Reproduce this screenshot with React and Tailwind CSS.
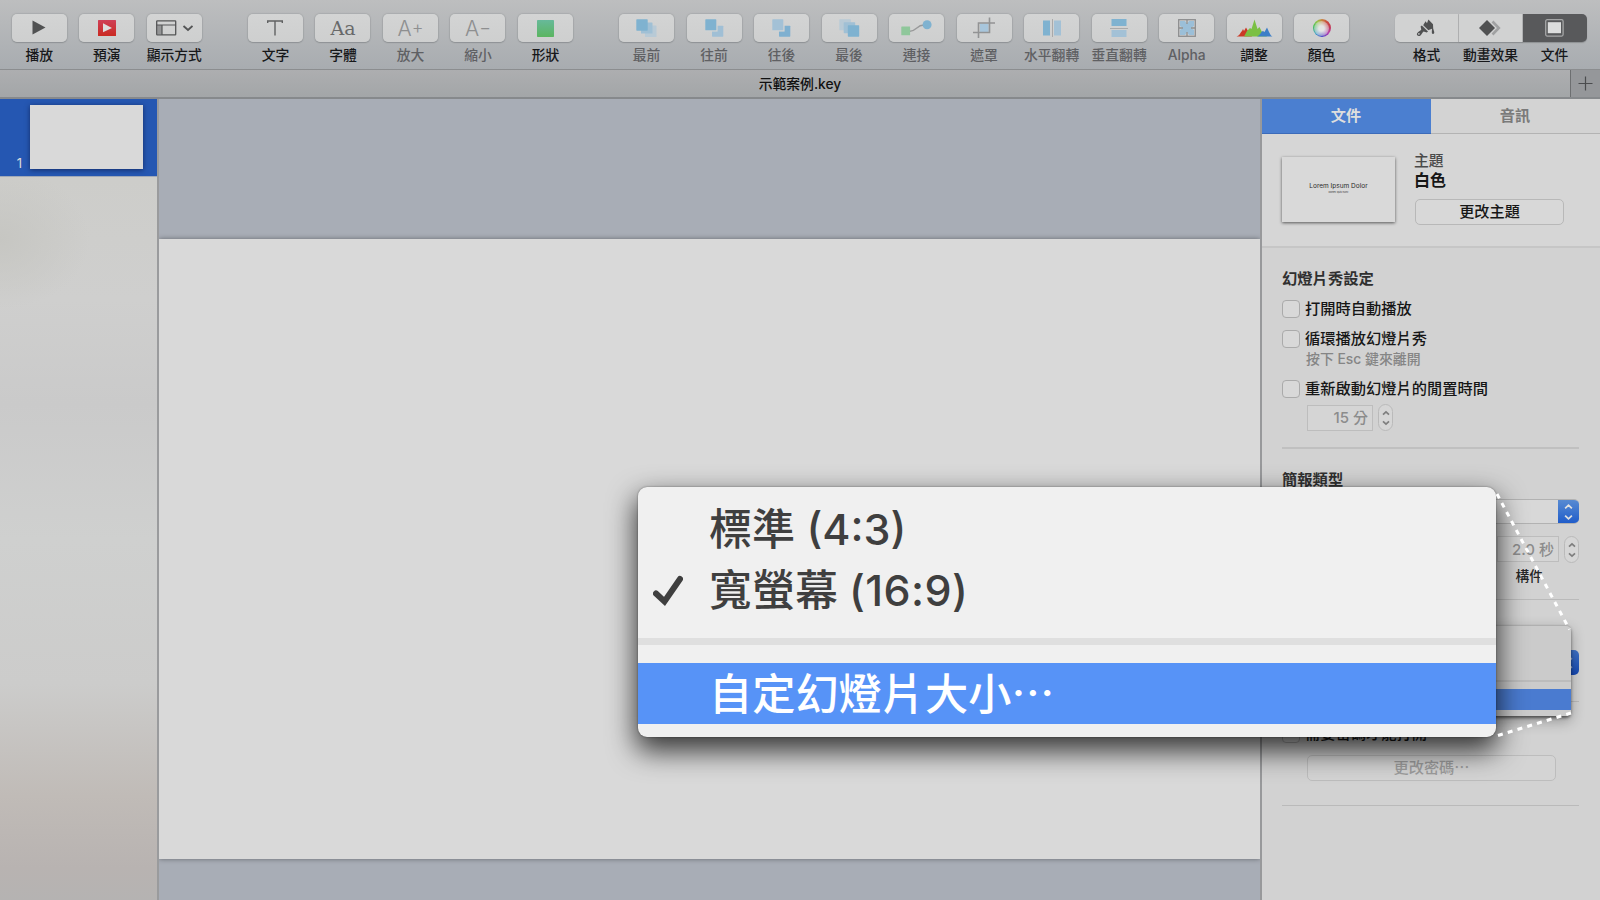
import React from "react";

const PlayIcon = () => (
  <svg width="14" height="16" viewBox="0 0 14 16">
    <path d="M0.5 0.5L13.5 7.5L0.5 14.5Z" fill="#505152" />
  </svg>
);

const RehearseIcon = () => (
  <svg width="18" height="16" viewBox="0 0 18 16">
    <defs>
      <linearGradient id="red" x1="0" y1="0" x2="0" y2="1">
        <stop offset="0" stopColor="#cf4057" />
        <stop offset="1" stopColor="#ca2a22" />
      </linearGradient>
    </defs>
    <rect width="18" height="16" rx="0.5" fill="url(#red)" />
    <path d="M5 3.3L14 8L5 12.3Z" fill="#dedede" />
  </svg>
);

const ViewIcon = () => (
  <svg width="37" height="16" viewBox="0 0 37 16" fill="none" stroke="#545556">
    <rect x="1.2" y="5" width="4.8" height="9" fill="#949596" stroke="none" />
    <rect x="0.7" y="0.9" width="19" height="14" rx="0.6" strokeWidth="1.3" />
    <path d="M0.7 5H19.7M6 5V15" strokeWidth="1.2" />
    <path d="M27.5 6L32 10L36.5 6" strokeWidth="1.8" />
  </svg>
);

const ShapeIcon = () => (
  <svg width="17" height="17" viewBox="0 0 17 17">
    <defs>
      <linearGradient id="green" x1="0" y1="0" x2="0" y2="1">
        <stop offset="0" stopColor="#67b99a" />
        <stop offset="1" stopColor="#5bb560" />
      </linearGradient>
    </defs>
    <rect width="17" height="17" rx="0.7" fill="url(#green)" />
  </svg>
);

const TextIcon = () => (
  <svg width="16" height="16" viewBox="0 0 16 16" fill="none" stroke="#606162">
    <path d="M0.7 3V1H15.3V3M8 1V15.5" strokeWidth="1.4" />
  </svg>
);

const FrontIcon = () => (
  <svg width="21" height="18" viewBox="0 0 21 18">
    <rect x="9" y="6.5" width="11.5" height="11.5" rx="0.6" fill="#b8cad6" />
    <rect x="5" y="3.5" width="11.5" height="11" rx="0.6" fill="#a0c0d5" />
    <rect x="0.3" y="0.3" width="11.4" height="11.4" rx="0.6" fill="#7fb2d0" />
  </svg>
);

const ForwardIcon = () => (
  <svg width="19" height="18" viewBox="0 0 19 18">
    <rect x="7" y="6.7" width="11.3" height="11" rx="0.6" fill="#a0bfd5" />
    <rect x="0" y="0" width="12.6" height="12.6" fill="#d1d2d3" />
    <rect x="0.3" y="0.3" width="11" height="11" rx="0.6" fill="#7fb2d0" />
  </svg>
);

const BackwardIcon = () => (
  <svg width="19" height="18" viewBox="0 0 19 18">
    <rect x="7" y="6.7" width="11.3" height="11" rx="0.6" fill="#7fb0d0" />
    <rect x="0" y="0" width="12.6" height="12.6" fill="#d1d2d3" />
    <rect x="0.3" y="0.3" width="11" height="11" rx="0.6" fill="#a3c1d6" />
  </svg>
);

const BackIcon = () => (
  <svg width="21" height="18" viewBox="0 0 21 18">
    <rect x="0.3" y="0.3" width="11.5" height="11" rx="0.6" fill="#b8cad6" />
    <rect x="4.7" y="3.2" width="11.5" height="11" rx="0.6" fill="#a0c0d5" />
    <rect x="8.8" y="6.3" width="11.4" height="11.4" rx="0.6" fill="#7fb2d0" />
  </svg>
);

const ConnectIcon = () => (
  <svg width="31" height="16" viewBox="0 0 31 16">
    <path d="M8 11.5C16 11.5 15 5 23 5" fill="none" stroke="#98999a" strokeWidth="1.3" />
    <rect x="0.3" y="6.5" width="8.8" height="8.8" rx="0.5" fill="#8fc79b" />
    <circle cx="26.1" cy="4.8" r="4.5" fill="#7fb2d0" />
  </svg>
);

const MaskIcon = () => (
  <svg width="22" height="22" viewBox="0 0 22 22" fill="none" stroke="#929394">
    <rect x="7" y="6.5" width="8.5" height="8.5" fill="#a8c6dc" stroke="none" />
    <path d="M5.5 21V6H22M16.5 0.5V15.5H0" strokeWidth="1.6" />
  </svg>
);

const FlipHIcon = () => (
  <svg width="18" height="18" viewBox="0 0 18 18">
    <rect x="0" y="1.5" width="7" height="15" fill="#7fb2d0" />
    <rect x="11" y="1.5" width="7" height="15" fill="#a3c1d6" />
    <path d="M9.5 0.5V18" stroke="#808182" strokeDasharray="1 1" />
  </svg>
);

const FlipVIcon = () => (
  <svg width="18" height="18" viewBox="0 0 18 18">
    <rect x="1.5" y="0" width="15" height="7" fill="#7fb2d0" />
    <rect x="1.5" y="11" width="15" height="7" fill="#a3c1d6" />
    <path d="M0.5 9.5H18" stroke="#808182" strokeDasharray="1 1" />
  </svg>
);

const AlphaIcon = () => (
  <svg width="18" height="18" viewBox="0 0 18 18" fill="none">
    <path d="M2 2H7L9 5L11 2H16V7L13 9L16 11V16H11L9 13L7 16H2V11L5 9L2 7Z" fill="#9bbfd8" />
    <path d="M6 6H12V12H6Z" fill="#9bbfd8" />
    <rect x="0.7" y="0.7" width="16.6" height="16.6" stroke="#8d8e8f" strokeWidth="1.3" />
    <path d="M9 1V5M9 13V17M1 9H5M13 9H17" stroke="#8d8e8f" strokeWidth="1.3" />
  </svg>
);

const AdjustIcon = () => (
  <svg width="37" height="18" viewBox="0 0 37 18">
    <path d="M0.5 17.5C4 16.5 4 14 6 12L7 10L8 12L10 8.5L12 12L16 17.5Z" fill="#cb3a26" />
    <path d="M8 17.5L11 12L14 9L15.5 10L18.5 0.5L21.5 10L23.5 8L26 13L31 17.5Z" fill="#7bc043" />
    <path d="M21 17.5C25 16 25 12 27 12L28.5 13L31 8.5L33 13C34 14 34 16.5 36.5 17.5Z" fill="#3d7fc8" />
  </svg>
);

const ColorIcon = () => (
  <div className="flex h-[18px] w-[18px] items-center justify-center rounded-full bg-[conic-gradient(#c9833f,#c9463f_12%,#c43a52_22%,#b440b0_36%,#4741c8_50%,#3c9ec8_63%,#43c05a_78%,#96c444_90%,#c9833f)]">
    <div className="h-[15px] w-[15px] rounded-full bg-[radial-gradient(circle,#e4e4e4_25%,#e4e4e466_75%)]"></div>
  </div>
);

const FormatIcon = () => (
  <svg width="20" height="18" viewBox="0 0 20 18" fill="#505152">
    <path d="M8.2 4.6L9.6 2.2L11 4.2L12.4 0.6L17 5.2L17.2 9.5L18.3 13.2Q18.4 15 17 15Q15.6 15 15.8 13.2L16 9.8L12 11.2L7 6.4Z" />
    <path d="M5.8 6.4L12 12.4L10.8 13.5L7.6 12.6C6.5 13 6 15.5 4.2 16.7C2.5 17.5 0.3 16.6 1 14.5C2 12.5 4.5 12 5.3 10.5L4.6 7.6Z" />
    <path d="M6.6 6L12.4 11.6" stroke="#d1d2d3" strokeWidth="0.7" />
    <circle cx="2.9" cy="14.9" r="0.8" fill="#d1d2d3" />
  </svg>
);

const AnimateIcon = () => (
  <svg width="22" height="16" viewBox="0 0 22 16">
    <path d="M13.5 1.5L19.8 8L13.5 14.5" fill="none" stroke="#a0a1a2" strokeWidth="2.6" />
    <path d="M8 0L16 8L8 16L0 8Z" fill="#505152" />
  </svg>
);

const DocumentIcon = () => (
  <svg width="19" height="18" viewBox="0 0 19 18" fill="none">
    <rect x="0.7" y="0.7" width="17.4" height="16.4" rx="1.5" stroke="#a5a6a7" strokeWidth="1.3" />
    <rect x="2.8" y="3.2" width="13.2" height="11" fill="#dcdddd" />
  </svg>
);

const groups = [
  [
    { label: "播放", icon: <PlayIcon /> },
    { label: "預演", icon: <RehearseIcon /> },
    { label: "顯示方式", icon: <ViewIcon /> },
  ],
  [
    { label: "文字", icon: <TextIcon /> },
    {
      label: "字體",
      icon: <span className="font-['DejaVu_Serif',serif] text-[19px] font-extralight text-[#68696a]">Aa</span>,
    },
    {
      label: "放大",
      icon: <span className="flex items-center text-[21px] font-light text-[#8e8f90]">A<span className="text-[18px]">+</span></span>,
      disabled: true,
    },
    {
      label: "縮小",
      icon: <span className="flex items-center text-[21px] font-light text-[#8e8f90]">A<span className="text-[18px]">−</span></span>,
      disabled: true,
    },
    { label: "形狀", icon: <ShapeIcon /> },
  ],
  [
    { label: "最前", icon: <FrontIcon />, disabled: true },
    { label: "往前", icon: <ForwardIcon />, disabled: true },
    { label: "往後", icon: <BackwardIcon />, disabled: true },
    { label: "最後", icon: <BackIcon />, disabled: true },
    { label: "連接", icon: <ConnectIcon />, disabled: true },
    { label: "遮罩", icon: <MaskIcon />, disabled: true },
    { label: "水平翻轉", icon: <FlipHIcon />, disabled: true },
    { label: "垂直翻轉", icon: <FlipVIcon />, disabled: true },
    { label: "Alpha", icon: <AlphaIcon />, disabled: true },
    { label: "調整", icon: <AdjustIcon /> },
    { label: "顏色", icon: <ColorIcon /> },
  ],
];

const segments = [
  { label: "格式", icon: <FormatIcon /> },
  { label: "動畫效果", icon: <AnimateIcon /> },
  { label: "文件", icon: <DocumentIcon />, active: true },
];

function ToolbarItem({ item }) {
  return (
    <div className="flex w-[67.5px] flex-col items-center">
      <button className="flex h-7 w-[55px] items-center justify-center rounded-[5px] bg-linear-to-b from-[#d3d4d4] to-[#cecfcf] leading-none shadow-[0_0_1px_1px_rgba(120,122,126,0.22),0_1px_1px_rgba(90,92,96,0.3)]">
        {item.icon}
      </button>
      <div
        className={`mt-[3px] text-[13.8px] leading-5 font-medium whitespace-nowrap ${
          item.disabled ? "text-[#5f6063]" : "text-[#17181a]"
        }`}
      >
        {item.label}
      </div>
    </div>
  );
}

function Toolbar() {
  return (
    <div className="flex h-[70px] items-start border-b border-[#8b8d8f] bg-linear-to-b from-[#bdbebf] to-[#a8acb0] pt-[14px] pl-[5.5px]">
      {groups.map((group, i) => (
        <div key={i} className="mr-[33.7px] flex">
          {group.map((item) => (
            <ToolbarItem key={item.label} item={item} />
          ))}
        </div>
      ))}
      <div className="ml-[5.5px] flex">
        {segments.map((item, i) => (
          <div key={item.label} className="flex w-16 flex-col items-center">
            <button
              className={`flex h-7 w-full items-center justify-center shadow-[0_1px_1px_rgba(90,92,96,0.4)] ${
                item.active ? "rounded-r-[5px] bg-[#58595b]" : "border-r border-[#b5b6b7] bg-[#d1d2d2]"
              } ${i === 0 ? "rounded-l-[5px]" : ""}`}
            >
              {item.icon}
            </button>
            <div className="mt-[3px] text-[13.8px] leading-5 font-medium whitespace-nowrap text-[#17181a]">
              {item.label}
            </div>
          </div>
        ))}
      </div>
    </div>
  );
}

function Sidebar() {
  return (
    <div className="flex w-[159px] flex-col border-r-2 border-[#9a9b9d] bg-[radial-gradient(ellipse_90px_70px_at_0_140px,#c6c6c2,transparent),linear-gradient(to_bottom,#cecfce_0,#cdcdca_10%,#cfcfce_25%,#cacaca_38%,#cfd0cf_55%,#cccccb_73%,#c0bbb7_87%,#b8b3b1_96%,#b5b3b2_100%)]">
      <div className="flex h-[78px] items-end border-b border-[#a0a9b8] bg-[#2557b2] pb-[7px]">
        <span className="w-[30px] pr-[8px] text-right text-[13px] leading-3 text-[#dcdcdc]">1</span>
        <div className="h-16 w-[113px] bg-[#d9d9d9] shadow-[0_1px_5px_rgba(0,0,30,0.5)]"></div>
      </div>
    </div>
  );
}

function Checkbox({ label }) {
  return (
    <label className="flex h-[18px] items-center gap-[5px]">
      <span className="h-[18px] w-[18px] rounded-[4px] border border-[#aaaaaa] bg-[#d8d8d8]"></span>
      <span className="text-[15.25px] leading-[18px] font-medium whitespace-nowrap text-[#161616]">{label}</span>
    </label>
  );
}

const UpDown = ({ color, width = 1.4, size = 8 }) => (
  <svg width={size} height={size * 2} viewBox="0 0 8 16" fill="none" stroke={color} strokeWidth={width}>
    <path d="M1 4.7L4 1.9L7 4.7M1 11.3L4 14.1L7 11.3" />
  </svg>
);

function Stepper() {
  return (
    <div className="flex h-[27px] w-[15px] items-center justify-center rounded-full border border-[#bababa] bg-[#d6d6d6]">
      <UpDown color="#7e7e7e" width={1.7} />
    </div>
  );
}

function Inspector() {
  return (
    <div className="flex w-[340px] flex-col border-l-2 border-[#98999b] bg-[#d2d2d2]">
      <div className="flex h-[35px] text-[15.2px] font-bold">
        <div className="flex w-[169px] items-center justify-center border-b border-[#3c6bb9] bg-[#4b7fd0] pt-px pr-px text-[#dedede]">
          文件
        </div>
        <div className="flex flex-1 items-center justify-center border-b border-[#b3b3b3] bg-[#d3d3d3] pt-px pr-px text-[#7a7a7a]">
          音訊
        </div>
      </div>
      <div className="flex h-[114px] border-b-2 border-[#c6c6c6] bg-[#d6d6d6] pt-[23px] pl-5">
        <div className="flex h-[65px] w-[113px] flex-col items-center bg-[#d9d9d9] pt-[25px] shadow-[0_1px_3px_rgba(0,0,0,0.6)]">
          <div className="text-[6.5px] leading-[9px] whitespace-nowrap text-[#2b2b2b]">Lorem Ipsum Dolor</div>
          <div className="text-[2.5px] leading-[3px] text-[#333]">Donec quis nunc</div>
        </div>
        <div className="ml-[19px] flex flex-col">
          <div className="-mt-[6px] text-[14.8px] leading-5 font-medium text-[#4a4a4a]">主題</div>
          <div className="-mt-px text-[16px] leading-5 font-bold text-[#161616]">白色</div>
          <button className="mt-[9px] ml-px flex h-[26px] w-[149px] items-center justify-center rounded-[5px] border border-[#b8b8b8] bg-[#d8d8d8] text-[15.2px] font-medium text-[#161616]">
            更改主題
          </button>
        </div>
      </div>

      <div className="ml-5 flex w-[297px] flex-col">
        <div className="mt-[21px] text-[15.3px] leading-5 font-bold text-[#303030]">幻燈片秀設定</div>
        <div className="mt-[11px]">
          <Checkbox label="打開時自動播放" />
        </div>
        <div className="mt-[12px]">
          <Checkbox label="循環播放幻燈片秀" />
        </div>
        <div className="mt-[2px] ml-6 text-[13.9px] leading-[18px] font-medium text-[#858585]">按下 Esc 鍵來離開</div>
        <div className="mt-[12px]">
          <Checkbox label="重新啟動幻燈片的閒置時間" />
        </div>
        <div className="mt-[6px] ml-[25px] flex items-center">
          <div className="mr-[5px] flex h-[26px] w-[66px] items-center justify-end border border-[#bdbdbd] bg-[#d5d5d5] pt-[2px] pr-[4px] text-[15px] font-medium text-[#8c8c8c]">
            15 分
          </div>
          <Stepper />
        </div>
        <div className="mt-[16px] border-b-2 border-[#c0c0c0]"></div>

        <div className="mt-[21px] text-[15.3px] leading-5 font-bold text-[#303030]">簡報類型</div>
        <div className="mt-[9px] flex h-[25px] overflow-hidden rounded-[5px] border-y border-[#b2b2b2] bg-[#d8d8d8]">
          <div className="flex-1"></div>
          <div className="-my-px flex w-[21px] items-center justify-center bg-linear-to-b from-[#5a8cd2] to-[#1d5ac9]">
            <UpDown color="#e0e0e0" size={9} width={1.6} />
          </div>
        </div>
        <div className="mt-[12px] flex justify-end gap-[5px]">
          <div className="flex h-[26px] w-[62px] items-center justify-end border border-[#bdbdbd] bg-[#d5d5d5] pt-[3px] pr-[4px] text-[15px] font-medium whitespace-nowrap text-[#8c8c8c]">
            2.0 秒
          </div>
          <Stepper />
        </div>
        <div className="mt-[4px] pr-[36px] text-right text-[13.8px] leading-[18px] font-medium text-[#262626]">構件</div>
        <div className="mt-[14px] border-b border-[#bababa]"></div>

        <div className="mt-[50px] flex h-[25px] justify-end">
          <div className="flex w-[21px] items-center justify-center rounded-r-[5px] bg-linear-to-b from-[#3f72c6] to-[#1547b0]">
            <UpDown color="#a8bbe0" size={9} width={1.6} />
          </div>
        </div>
        <div className="mt-[26px] border-b border-[#bababa]"></div>

        <div className="mt-[23px]">
          <Checkbox label="需要密碼才能打開" />
        </div>
        <button className="mt-[12px] ml-[25px] flex h-[26px] w-[249px] items-center justify-center rounded-[5px] border border-[#bdbdbd] bg-[#d4d4d4] text-[15.2px] font-medium text-[#9c9c9c]">
          更改密碼⋯
        </button>
        <div className="mt-[24px] border-b border-[#bababa]"></div>
      </div>
    </div>
  );
}

function SmallMenu() {
  return (
    <div className="absolute top-[625px] left-[1400px] flex h-[91px] w-[171px] flex-col rounded-[5px] border-t border-[#b0b0b0] bg-[#cbcbcb] shadow-[0_2px_3px_rgba(0,0,0,0.5),0_5px_14px_rgba(0,0,0,0.3)]">
      <div className="mt-[54px] h-[2px] bg-[#bcbcbc]"></div>
      <div className="mt-[7px] h-[21px] bg-[#4a7bd0]"></div>
    </div>
  );
}

function SizeMenu() {
  return (
    <div className="absolute top-[487px] left-[637.5px] flex h-[250px] w-[858.5px] flex-col rounded-[9px] bg-[#f0f0f0] pt-[12px] text-[43px] text-[#3f3f3f] shadow-[0_0_2px_rgba(0,0,0,0.45),0_12px_28px_2px_rgba(0,0,0,0.75)]">
      <div className="flex h-[61px] items-center pl-[71.5px] font-medium">標準 (4:3)</div>
      <div className="flex h-[61px] items-center font-medium">
        <div className="w-[71.5px] pl-[15.5px]">
          <svg width="30" height="32" viewBox="0 0 30 32" fill="none" stroke="#3f3f3f">
            <path d="M3 18.5L11.5 26.5L27 4" strokeWidth="6" strokeLinecap="round" />
          </svg>
        </div>
        寬螢幕 <span className="ml-[11px] tracking-[0.4px]">(16:9)</span>
      </div>
      <div className="mt-[17px] h-[7px] bg-[#dfdfdf]"></div>
      <div className="mt-[18px] flex h-[61px] items-center bg-[#5793f7] pt-[2px] pl-[71.5px] text-[43.2px] font-medium text-white">
        自定幻燈片大小⋯
      </div>
    </div>
  );
}

export default function App() {
  return (
    <div
      lang="zh-Hant"
      className="relative flex h-[900px] w-[1600px] flex-col overflow-hidden bg-[#a8adb6] font-['Inter','Noto_Sans_CJK_TC',sans-serif]"
    >
      <Toolbar />
      <div className="flex h-[29px] border-b-2 border-[#86898c] bg-linear-to-b from-[#adaeb0] to-[#a3a6a8]">
        <div className="flex flex-1 items-center justify-center pt-[2px] pl-[30px] text-[13.8px] font-medium text-[#111]">
          示範案例.key
        </div>
        <div className="flex w-[30px] items-center justify-center border-l border-[#6d6f71] bg-[#95979a]">
          <svg width="15" height="15" viewBox="0 0 15 15" stroke="#4b4c4e" strokeWidth="1.2">
            <path d="M7.5 0.5V14.5M0.5 7.5H14.5" />
          </svg>
        </div>
      </div>
      <div className="flex flex-1">
        <Sidebar />
        <div className="flex flex-1 flex-col overflow-hidden pt-[140px]">
          <div className="h-[620px] bg-[#d9d9d9] shadow-[0_0_5px_rgba(0,0,0,0.4)]"></div>
        </div>
        <Inspector />
      </div>
      <SmallMenu />
      <SizeMenu />
      <svg
        className="absolute top-[480px] left-[1490px]"
        width="90"
        height="265"
        viewBox="0 0 90 265"
        fill="none"
        stroke="#fff"
        strokeWidth="3"
        strokeDasharray="5 5.2"
      >
        <path d="M7 14L79.5 149.5" />
        <path d="M8 255.5L81 233" />
      </svg>
    </div>
  );
}
